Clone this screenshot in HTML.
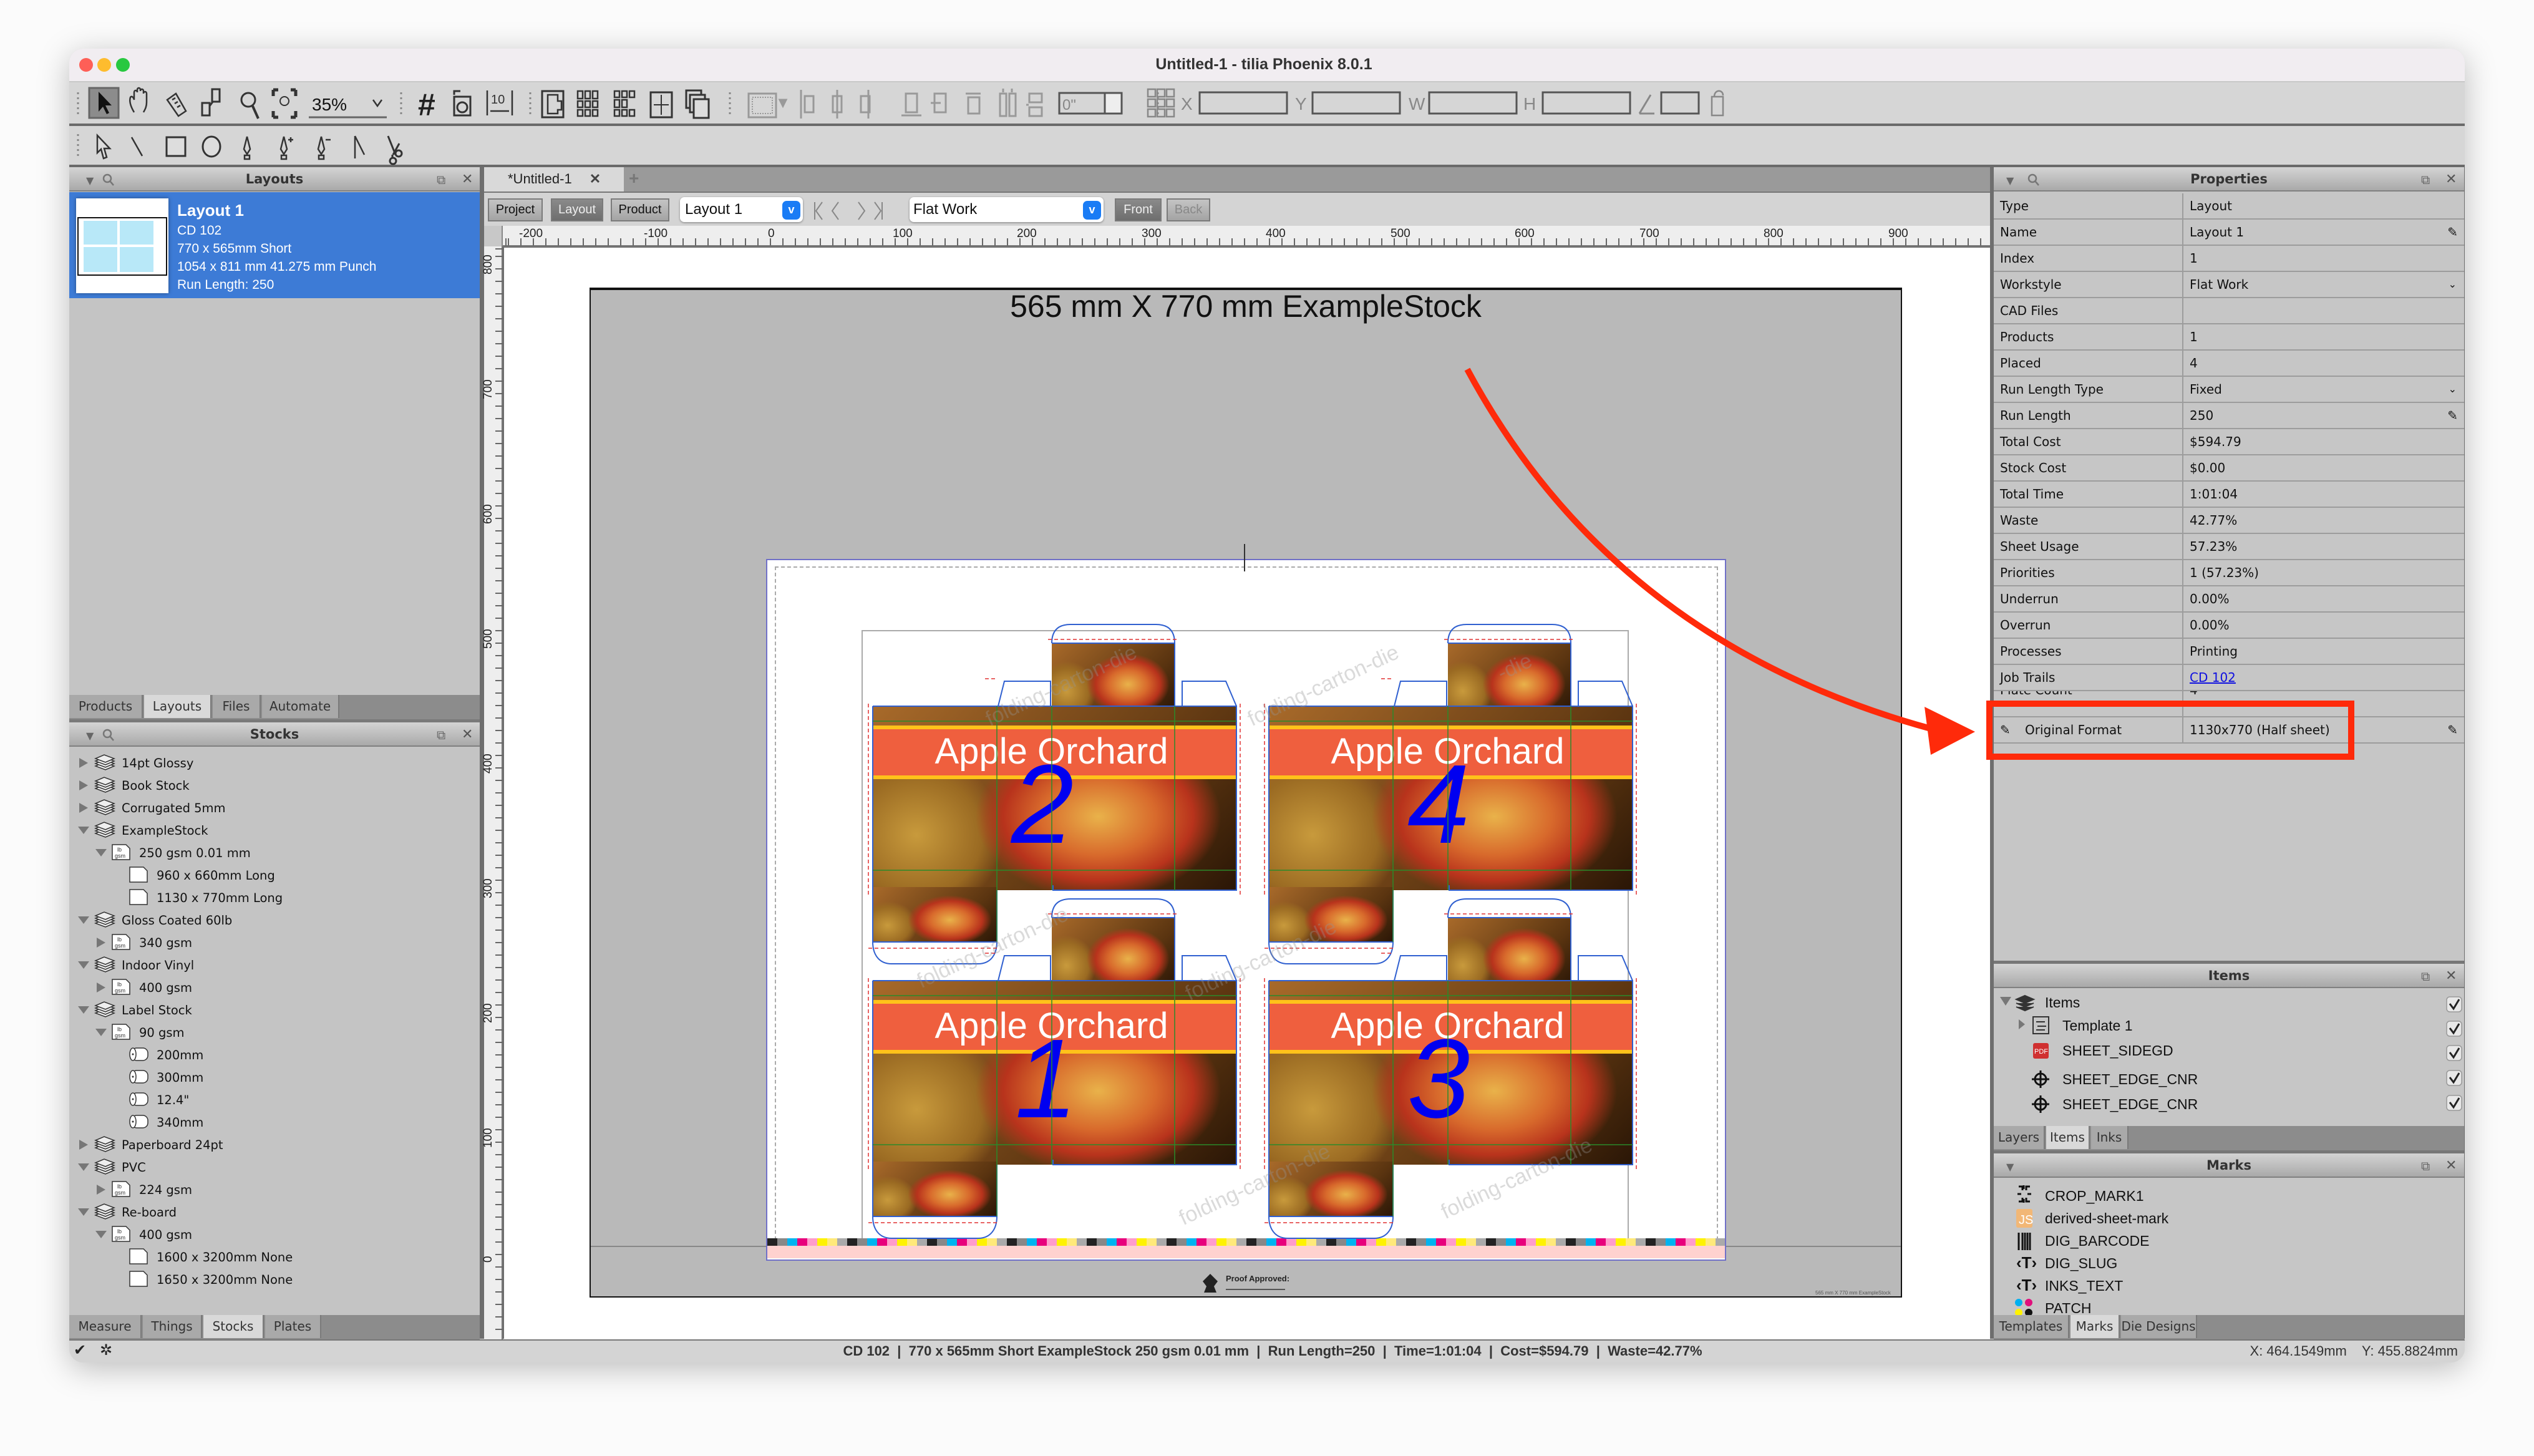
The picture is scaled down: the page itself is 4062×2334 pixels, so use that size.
<!DOCTYPE html>
<html><head><meta charset="utf-8">
<style>
*{margin:0;padding:0;box-sizing:border-box}
body{width:4062px;height:2334px;background:#fbfbfb;position:relative;overflow:hidden;font-family:"Liberation Sans",sans-serif;color:#111}
.a{position:absolute}
.win{left:111px;top:78px;width:3840px;height:2106px;border-radius:22px;background:#d6d6d6;box-shadow:0 10px 50px rgba(0,0,0,.25);overflow:hidden}
.ph{position:absolute;height:39px;background:linear-gradient(#d4d4d4,#a9a9a9);border-bottom:2px solid #808080;font:bold 21px "DejaVu Sans",sans-serif;color:#333;text-align:center;line-height:38px}
.tabs{position:absolute;height:39px;background:#8c8c8c}
.tab{position:absolute;top:0;height:37px;background:#a9a9a9;border-right:2px solid #7a7a7a;font:20px "DejaVu Sans",sans-serif;color:#333;line-height:37px;text-align:center;white-space:nowrap}
.tab.s{background:#d9d9d9}
.pr{position:absolute;left:3196px;width:754px;height:42px;border-bottom:2px solid #9c9c9c;font:20px "DejaVu Sans",sans-serif;line-height:40px}
.pr span{position:absolute}
.pr .l{left:10px}.pr .v{left:314px}
.pr:before{content:"";position:absolute;left:302px;top:0;bottom:0;width:2px;background:#9c9c9c}
.btn{position:absolute;top:318px;height:37px;border:2px solid #7b7b7b;background:linear-gradient(#c4c4c4,#a4a4a4);font:20px "Liberation Sans",sans-serif;line-height:33px;text-align:center;color:#111}
.btn.d{background:linear-gradient(#8a8a8a,#6e6e6e);color:#eee}
.rl{position:absolute;top:364px;font:19px "Liberation Sans",sans-serif;color:#222}
.vl{position:absolute;left:772px;font:19px "Liberation Sans",sans-serif;color:#222;transform:rotate(-90deg);transform-origin:left top}
.ct{position:absolute;width:583px;height:378px}
.photo{position:absolute;background:radial-gradient(ellipse 45% 60% at 62% 60%,#e9b24a 0%,#d86a2c 35%,#b8331c 58%,rgba(120,40,10,0) 75%),radial-gradient(ellipse 30% 55% at 12% 70%,#c89a3c 0%,#9a6a22 60%,rgba(0,0,0,0) 80%),linear-gradient(135deg,#a86a2a,#5a3410 70%,#2a1606)}
.band{position:absolute;left:0;top:31px;width:583px;height:86px;background:#ef5f3e;border-top:6px solid #ffc21a;border-bottom:6px solid #ffc21a;color:#fff;font:58px "Liberation Sans",sans-serif;line-height:72px;text-align:center;text-indent:-10px;white-space:nowrap}
.num{position:absolute;font:italic 180px "Liberation Sans",sans-serif;color:#0000f0;line-height:1}
.wm{position:absolute;font:34px "Liberation Sans",sans-serif;color:rgba(150,150,150,.35);transform:rotate(-25deg);white-space:nowrap}
</style></head><body>
<div class="a win"></div>
<div class="a" style="left:111px;top:78px;width:3840px;height:54px;background:#f1edf1;border-radius:22px 22px 0 0;border-bottom:2px solid #c8c8c8"></div>
<div class="a" style="left:127px;top:93px;width:22px;height:22px;border-radius:50%;background:#fe5f57"></div>
<div class="a" style="left:156px;top:93px;width:22px;height:22px;border-radius:50%;background:#febc2e"></div>
<div class="a" style="left:186px;top:93px;width:22px;height:22px;border-radius:50%;background:#28c840"></div>
<div class="a" style="left:1500px;top:89px;width:1052px;text-align:center;font:bold 25px 'Liberation Sans',sans-serif;color:#333">Untitled-1 - tilia Phoenix 8.0.1</div>
<div class="a" style="left:111px;top:132px;width:3840px;height:66px;background:#d6d6d6"></div>
<div class="a" style="left:111px;top:198px;width:3840px;height:4px;background:#6a6a6a"></div>
<div class="a" style="left:111px;top:202px;width:3840px;height:62px;background:#d6d6d6"></div>
<div class="a" style="left:111px;top:264px;width:3840px;height:4px;background:#6a6a6a"></div>
<svg class="a" style="left:0;top:0" width="4062" height="268" fill="none" stroke="#333" stroke-width="3">
<g stroke="#888" stroke-dasharray="3 5" stroke-width="3"><path d="M125 148v40M643 148v40M850 148v40M1170 148v40M125 215v40M1856 148v40"/></g>
<rect x="143" y="141" width="47" height="48" fill="#8c8c8c" stroke="#666"/>
<path d="M158 147l0 32 7-8 6 12 4-2-6-12 10 0z" fill="#111" stroke="none"/>
<path d="M215 180c-6-10-8-18-6-24 2-3 5 0 6 4v-12c0-4 5-4 5 0v-4c0-4 5-4 5 0v2c0-4 5-4 5 0v4c0-4 5-4 5 0v14c0 8-3 12-5 16" stroke-width="2.5"/>
<path d="M268 160l14-10 16 28-12 8z M276 160l5-3M280 166l5-3M284 172l5-3" stroke-width="2.5"/>
<rect x="324" y="165" width="12" height="20"/><rect x="340" y="143" width="12" height="20"/><path d="M336 170l6-8"/>
<circle cx="398" cy="160" r="11"/><path d="M405 170l9 20" stroke-width="4"/>
<path d="M438 144h8M438 144v10M474 144h-8M474 144v10M438 188h8M438 188v-10M474 188h-8M474 188v-10" stroke-width="5"/><circle cx="456" cy="162" r="7" stroke-width="2"/>
<text x="500" y="177" font-family="Liberation Sans" font-size="28" fill="#111" stroke="none">35%</text>
<path d="M495 188h125" stroke="#666"/><path d="M598 160l7 10 7-10" stroke-width="2.5"/>
<text x="670" y="185" font-family="Liberation Sans" font-size="50" font-weight="bold" fill="#222" stroke="none">#</text>
<rect x="728" y="155" width="26" height="30"/><circle cx="741" cy="172" r="8"/><path d="M728 152v-6h10"/>
<path d="M781 145v40M821 145v40M786 178h30" stroke-width="2.5"/><text x="787" y="166" font-family="Liberation Sans" font-size="20" fill="#333" stroke="none">10</text>
<rect x="869" y="146" width="34" height="42"/><path d="M878 152h16v10h6v14h-6v6h-16z" stroke-width="2.5"/>
<g stroke-width="2.5"><rect x="926" y="146" width="8" height="12"/><rect x="938" y="146" width="8" height="12"/><rect x="950" y="146" width="8" height="12"/><rect x="926" y="162" width="8" height="10"/><rect x="938" y="162" width="8" height="10"/><rect x="950" y="162" width="8" height="10"/><rect x="926" y="176" width="8" height="10"/><rect x="938" y="176" width="8" height="10"/><rect x="950" y="176" width="8" height="10"/>
<rect x="985" y="146" width="8" height="10"/><rect x="997" y="146" width="8" height="10"/><rect x="985" y="160" width="8" height="12"/><rect x="997" y="160" width="8" height="12"/><rect x="985" y="176" width="8" height="10"/><rect x="997" y="176" width="8" height="10"/><rect x="1009" y="146" width="8" height="10"/><rect x="1009" y="176" width="8" height="10"/></g>
<rect x="1043" y="148" width="34" height="40"/><path d="M1060 152v32M1048 168h24" stroke-width="2"/>
<rect x="1100" y="145" width="24" height="28"/><rect x="1106" y="152" width="24" height="28" fill="#d6d6d6"/><rect x="1112" y="159" width="24" height="30" fill="#ddd"/>
<g stroke="#999"><rect x="1200" y="150" width="44" height="38"/><rect x="1206" y="156" width="32" height="26" stroke-dasharray="2 2" stroke-width="2"/><path d="M1250 160l5 10 5-10z" fill="#999"/>
<path d="M1284 144v46M1290 154h14v26h-14z M1342 144v46M1335 154h14v26h-14z M1392 144v46M1380 154h14v26h-14z M1445 185h32M1452 150h18v30h-18z M1492 165h16M1498 150h18v30h-18z M1548 150h24M1552 156h18v26h-18z"/>
<path d="M1603 150v36h10v-36zM1618 150v36h10v-36zM1608 142v6M1622 142v6 M1650 150h20v14h-20zM1650 172h20v14h-20zM1645 168h4"/></g>
<rect x="1698" y="149" width="100" height="33" fill="#d6d6d6" stroke="#555"/><rect x="1771" y="149" width="27" height="33" fill="#eee" stroke="#555"/>
<text x="1703" y="176" font-family="Liberation Sans" font-size="24" fill="#888" stroke="none">0"</text>
<g stroke="#888" stroke-width="2.5"><rect x="1840" y="143" width="12" height="12"/><rect x="1855" y="143" width="12" height="12"/><rect x="1870" y="143" width="12" height="12"/><rect x="1840" y="159" width="12" height="12"/><rect x="1855" y="159" width="12" height="12"/><rect x="1870" y="159" width="12" height="12"/><rect x="1840" y="175" width="12" height="12"/><rect x="1855" y="175" width="12" height="12"/><rect x="1870" y="175" width="12" height="12"/></g>
<g stroke="#555" fill="#d6d6d6"><rect x="1923" y="148" width="140" height="34"/><rect x="2104" y="148" width="140" height="34"/><rect x="2291" y="148" width="140" height="34"/><rect x="2473" y="148" width="140" height="34"/><rect x="2663" y="148" width="60" height="34"/></g>
<g font-family="Liberation Sans" font-size="28" fill="#888" stroke="none"><text x="1893" y="176">X</text><text x="2076" y="176">Y</text><text x="2258" y="176">W</text><text x="2442" y="176">H</text></g>
<path d="M2628 182l18-30M2628 182h24" stroke="#888"/><path d="M2744 185v-30h18v30zM2748 155c0-12 14-12 14-2" stroke="#888" stroke-width="2.5"/>
<path d="M156 217v28l6-6 4 15 5-2-4-14h9z" fill="#ddd" stroke-width="2.5"/>
<path d="M211 220l17 30" stroke-width="2.5"/>
<rect x="267" y="220" width="30" height="30" fill="#ddd"/>
<ellipse cx="339" cy="235" rx="14" ry="16" fill="#ddd"/>
<path d="M396 219l-5 20 5 8 5-8zM392 249h8v6h-8z" stroke-width="2.5"/>
<path d="M455 219l-5 20 5 8 5-8zM451 249h8v6h-8zM462 224h8M466 220v8" stroke-width="2.5"/>
<path d="M515 219l-5 20 5 8 5-8zM511 249h8v6h-8zM522 224h8" stroke-width="2.5"/>
<path d="M569 218v36M569 218l15 30" stroke-width="2.5"/>
<path d="M622 218l12 30M640 230l-10 18M629 248v6" stroke-width="3"/><circle cx="639" cy="246" r="5"/><circle cx="630" cy="258" r="5"/>
</svg>

<div class="a" style="left:111px;top:268px;width:3840px;height:1878px;background:#6e6e6e"></div>

<!-- LEFT PANEL -->
<div class="a" style="left:111px;top:268px;width:658px;height:1878px;background:#c4c4c4"></div>
<div class="ph" style="left:111px;top:268px;width:658px">Layouts</div>
<div class="a" style="left:138px;top:280px;font:16px 'DejaVu Sans';color:#666">▼</div>
<svg class="a" style="left:162px;top:276px" width="24" height="24" fill="none" stroke="#777" stroke-width="2.5"><circle cx="10" cy="10" r="6"/><path d="M14 14l6 7"/></svg>
<div class="a" style="left:700px;top:276px;font:20px 'DejaVu Sans';color:#666">⧉</div>
<div class="a" style="left:740px;top:275px;font:bold 22px 'DejaVu Sans';color:#555">✕</div>
<div class="a" style="left:111px;top:308px;width:658px;height:170px;background:#3d7bd6"></div>
<div class="a" style="left:122px;top:318px;width:148px;height:152px;background:#fff;box-shadow:0 0 6px rgba(0,0,0,.4)"></div>
<div class="a" style="left:124px;top:348px;width:144px;height:94px;border:2px solid #111;background:#fff"></div>
<div class="a" style="left:134px;top:354px;width:54px;height:38px;background:#b8e8f8"></div>
<div class="a" style="left:192px;top:354px;width:54px;height:38px;background:#b8e8f8"></div>
<div class="a" style="left:134px;top:396px;width:54px;height:40px;background:#b8e8f8"></div>
<div class="a" style="left:192px;top:396px;width:54px;height:40px;background:#b8e8f8"></div>
<div class="a" style="left:284px;top:322px;font:bold 26px 'Liberation Sans';color:#fff">Layout 1</div>
<div class="a" style="left:284px;top:355px;font:21px/29px 'Liberation Sans';color:#fff">CD 102<br>770 x 565mm Short<br>1054 x 811 mm 41.275 mm Punch<br>Run Length: 250</div>

<div class="tabs" style="left:111px;top:1114px;width:658px">
<div class="tab" style="left:0;width:118px">Products</div><div class="tab s" style="left:120px;width:108px">Layouts</div><div class="tab" style="left:230px;width:77px">Files</div><div class="tab" style="left:309px;width:124px">Automate</div></div>
<div class="a" style="left:111px;top:1153px;width:658px;height:5px;background:#7a7a7a"></div>
<div class="ph" style="left:111px;top:1158px;width:658px">Stocks</div>
<div class="a" style="left:138px;top:1170px;font:16px 'DejaVu Sans';color:#666">▼</div>
<svg class="a" style="left:162px;top:1166px" width="24" height="24" fill="none" stroke="#777" stroke-width="2.5"><circle cx="10" cy="10" r="6"/><path d="M14 14l6 7"/></svg>
<div class="a" style="left:700px;top:1166px;font:20px 'DejaVu Sans';color:#666">⧉</div>
<div class="a" style="left:740px;top:1165px;font:bold 22px 'DejaVu Sans';color:#555">✕</div>

<svg class="a" style="left:111px;top:1205px" width="658" height="870">
<defs>
<g id="stk" fill="#eee" stroke="#333" stroke-width="1.5"><path d="M2 18l14-6 16 6-14 6z"/><path d="M2 14l14-6 16 6-14 6z"/><path d="M2 10l14-6 16 6-14 6z"/><path d="M2 6l14-6 16 6-14 6z"/></g>
<g id="gsm"><path d="M1 1h22l6 6v18h-28z" fill="#fff" stroke="#333" stroke-width="1.5"/><text x="9" y="12" font-size="9" font-family="Liberation Sans" fill="#333">lb</text><text x="5" y="22" font-size="9" font-family="Liberation Sans" fill="#333">gsm</text></g>
<g id="sht"><path d="M1 1h22l6 6v18h-28z" fill="#fff" stroke="#333" stroke-width="1.5"/></g>
<g id="rol"><rect x="4" y="3" width="26" height="20" rx="8" fill="#fff" stroke="#333" stroke-width="1.5"/><ellipse cx="6" cy="13" rx="5" ry="10" fill="#fff" stroke="#333" stroke-width="1.5"/><circle cx="6" cy="13" r="1.5" fill="#333"/></g>
<path id="rt" d="M0 0l14 8-14 8z" fill="#777"/>
<path id="dn" d="M0 0h18l-9 12z" fill="#777"/>
</defs>
<g font-family="DejaVu Sans" font-size="19.5" fill="#111">
<use href="#rt" x="16" y="10"/><use href="#stk" x="40" y="5"/><text x="84" y="25">14pt Glossy</text>
<use href="#rt" x="16" y="46"/><use href="#stk" x="40" y="41"/><text x="84" y="61">Book Stock</text>
<use href="#rt" x="16" y="82"/><use href="#stk" x="40" y="77"/><text x="84" y="97">Corrugated 5mm</text>
<use href="#dn" x="14" y="120"/><use href="#stk" x="40" y="113"/><text x="84" y="133">ExampleStock</text>
<use href="#dn" x="42" y="156"/><use href="#gsm" x="68" y="148"/><text x="112" y="169">250 gsm 0.01 mm</text>
<use href="#sht" x="96" y="184"/><text x="140" y="205">960 x 660mm Long</text>
<use href="#sht" x="96" y="220"/><text x="140" y="241">1130 x 770mm Long</text>
<use href="#dn" x="14" y="264"/><use href="#stk" x="40" y="257"/><text x="84" y="277">Gloss Coated 60lb</text>
<use href="#rt" x="44" y="298"/><use href="#gsm" x="68" y="292"/><text x="112" y="313">340 gsm</text>
<use href="#dn" x="14" y="336"/><use href="#stk" x="40" y="329"/><text x="84" y="349">Indoor Vinyl</text>
<use href="#rt" x="44" y="370"/><use href="#gsm" x="68" y="364"/><text x="112" y="385">400 gsm</text>
<use href="#dn" x="14" y="408"/><use href="#stk" x="40" y="401"/><text x="84" y="421">Label Stock</text>
<use href="#dn" x="42" y="444"/><use href="#gsm" x="68" y="436"/><text x="112" y="457">90 gsm</text>
<use href="#rol" x="96" y="472"/><text x="140" y="493">200mm</text>
<use href="#rol" x="96" y="508"/><text x="140" y="529">300mm</text>
<use href="#rol" x="96" y="544"/><text x="140" y="565">12.4"</text>
<use href="#rol" x="96" y="580"/><text x="140" y="601">340mm</text>
<use href="#rt" x="16" y="622"/><use href="#stk" x="40" y="617"/><text x="84" y="637">Paperboard 24pt</text>
<use href="#dn" x="14" y="660"/><use href="#stk" x="40" y="653"/><text x="84" y="673">PVC</text>
<use href="#rt" x="44" y="694"/><use href="#gsm" x="68" y="688"/><text x="112" y="709">224 gsm</text>
<use href="#dn" x="14" y="732"/><use href="#stk" x="40" y="725"/><text x="84" y="745">Re-board</text>
<use href="#dn" x="42" y="768"/><use href="#gsm" x="68" y="760"/><text x="112" y="781">400 gsm</text>
<use href="#sht" x="96" y="796"/><text x="140" y="817">1600 x 3200mm None</text>
<use href="#sht" x="96" y="832"/><text x="140" y="853">1650 x 3200mm None</text>
</g></svg>
<div class="tabs" style="left:111px;top:2108px;width:658px">
<div class="tab" style="left:0;width:116px">Measure</div><div class="tab" style="left:118px;width:95px">Things</div><div class="tab s" style="left:215px;width:97px">Stocks</div><div class="tab" style="left:314px;width:90px">Plates</div></div>

<!-- CENTER -->
<div class="a" style="left:776px;top:268px;width:2414px;height:39px;background:#9a9a9a"></div>
<div class="a" style="left:776px;top:268px;width:224px;height:39px;background:#d9d9d9;font:22px 'Liberation Sans';line-height:38px;color:#222"><span style="margin-left:38px">*Untitled-1</span><span style="margin-left:28px;font-weight:bold;color:#444">✕</span></div>
<div class="a" style="left:1008px;top:270px;font:bold 28px 'Liberation Sans';color:#777">+</div>
<div class="a" style="left:776px;top:307px;width:2414px;height:55px;background:#d4d4d4;border-top:2px solid #777"></div>
<div class="btn" style="left:782px;width:88px">Project</div>
<div class="btn d" style="left:883px;width:84px">Layout</div>
<div class="btn" style="left:979px;width:94px">Product</div>
<div class="a" style="left:1090px;top:316px;width:197px;height:40px;background:#fff;border-radius:7px;box-shadow:0 1px 3px rgba(0,0,0,.4);font:24px 'Liberation Sans';line-height:40px;padding-left:8px">Layout 1</div>
<div class="a" style="left:1254px;top:322px;width:29px;height:30px;background:#1a7cf5;border-radius:7px;color:#fff;font:bold 18px 'Liberation Sans';text-align:center;line-height:28px">v</div>
<svg class="a" style="left:1300px;top:318px" width="150" height="40" fill="none" stroke="#888" stroke-width="2"><path d="M6 6v28M18 6l-10 14 10 14M44 6l-10 14 10 14M76 6l10 14-10 14M102 6l10 14-10 14M114 6v28"/></svg>
<div class="a" style="left:1458px;top:316px;width:311px;height:40px;background:#fff;border-radius:7px;box-shadow:0 1px 3px rgba(0,0,0,.4);font:24px 'Liberation Sans';line-height:40px;padding-left:6px">Flat Work</div>
<div class="a" style="left:1736px;top:322px;width:29px;height:30px;background:#1a7cf5;border-radius:7px;color:#fff;font:bold 18px 'Liberation Sans';text-align:center;line-height:28px">v</div>
<div class="btn d" style="left:1787px;width:75px">Front</div>
<div class="btn" style="left:1870px;width:70px;color:#888">Back</div>

<div class="a" style="left:776px;top:362px;width:2414px;height:33px;background:#eeeeee;border-bottom:2px solid #777"></div>
<div class="a" style="left:806px;top:382px;width:2384px;height:12px;background:repeating-linear-gradient(90deg,#666 0 2px,transparent 2px 20px);background-position:8px 0"></div>
<div class="a" style="left:776px;top:362px;width:30px;height:33px;background:#c8c8c8;border-right:2px solid #888"></div>
<div class="rl" style="left:832px">-200</div><div class="rl" style="left:1032px">-100</div><div class="rl" style="left:1231px">0</div><div class="rl" style="left:1431px">100</div><div class="rl" style="left:1630px">200</div><div class="rl" style="left:1830px">300</div><div class="rl" style="left:2029px">400</div><div class="rl" style="left:2229px">500</div><div class="rl" style="left:2428px">600</div><div class="rl" style="left:2628px">700</div><div class="rl" style="left:2827px">800</div><div class="rl" style="left:3027px">900</div>
<div class="a" style="left:776px;top:395px;width:30px;height:1752px;background:#eeeeee;border-right:2px solid #777"></div>
<div class="a" style="left:794px;top:395px;width:12px;height:1752px;background:repeating-linear-gradient(180deg,#666 0 2px,transparent 2px 20px);background-position:0 15px"></div>
<div class="vl" style="top:440px">800</div><div class="vl" style="top:640px">700</div><div class="vl" style="top:840px">600</div><div class="vl" style="top:1040px">500</div><div class="vl" style="top:1240px">400</div><div class="vl" style="top:1440px">300</div><div class="vl" style="top:1640px">200</div><div class="vl" style="top:1840px">100</div><div class="vl" style="top:2024px">0</div>

<div class="a" style="left:808px;top:397px;width:2382px;height:1750px;background:#fff"></div>
<div class="a" style="left:945px;top:461px;width:2104px;height:1619px;background:#b9b9b9;border:2px solid #111;border-top-width:4px"></div>
<div class="a" style="left:945px;top:462px;width:2104px;text-align:center;font:50px 'Liberation Sans';color:#111">565 mm X 770 mm ExampleStock</div>
<div class="a" style="left:947px;top:1997px;width:2100px;height:2px;background:#888"></div>
<div class="a" style="left:1228px;top:896px;width:1539px;height:1125px;background:#fff;border:2px solid #7070c8"></div>
<div class="a" style="left:1242px;top:908px;width:1512px;height:1090px;border:2px dashed #aaa"></div>
<div class="a" style="left:1994px;top:872px;width:2px;height:44px;background:#333"></div>
<div class="a" style="left:1381px;top:1010px;width:1230px;height:985px;border:2px solid #aaa"></div>
<div class="a" style="left:1230px;top:1985px;width:1535px;height:12px;background:repeating-linear-gradient(90deg,#222 0 16px,#888 16px 32px,#00b4f0 32px 48px,#e8007c 48px 64px,#ff9ccc 64px 80px,#fff200 80px 96px,#ffe97a 96px 112px,#aaa 112px 128px)"></div>
<div class="a" style="left:1230px;top:1997px;width:1535px;height:20px;background:#ffd2cf"></div>
<svg class="a" style="left:1925px;top:2040px" width="30" height="34"><path d="M15 2l12 12-6 8 4 10H5l4-10-6-8z" fill="#222"/></svg>
<div class="a" style="left:1965px;top:2042px;font:bold 13px 'Liberation Sans';color:#222">Proof Approved:</div>
<div class="a" style="left:1965px;top:2066px;width:95px;height:2px;background:#555"></div>
<div class="a" style="left:2910px;top:2068px;font:8px 'Liberation Sans';color:#555">565 mm X 770 mm ExampleStock</div>

<div class="ct" style="left:1399px;top:1132px">
<div class="photo" style="left:287px;top:-101px;width:197px;height:110px"></div>
<div class="photo" style="left:0;top:0;width:583px;height:295px"></div>
<div class="photo" style="left:0;top:290px;width:199px;height:88px"></div>
<div class="band">Apple Orchard</div>
<div class="num" style="left:222px;top:68px">2</div>
</div>
<div class="ct" style="left:2034px;top:1132px">
<div class="photo" style="left:287px;top:-101px;width:197px;height:110px"></div>
<div class="photo" style="left:0;top:0;width:583px;height:295px"></div>
<div class="photo" style="left:0;top:290px;width:199px;height:88px"></div>
<div class="band">Apple Orchard</div>
<div class="num" style="left:222px;top:68px">4</div>
</div>
<div class="ct" style="left:1399px;top:1572px">
<div class="photo" style="left:287px;top:-101px;width:197px;height:110px"></div>
<div class="photo" style="left:0;top:0;width:583px;height:295px"></div>
<div class="photo" style="left:0;top:290px;width:199px;height:88px"></div>
<div class="band">Apple Orchard</div>
<div class="num" style="left:228px;top:68px">1</div>
</div>
<div class="ct" style="left:2034px;top:1572px">
<div class="photo" style="left:287px;top:-101px;width:197px;height:110px"></div>
<div class="photo" style="left:0;top:0;width:583px;height:295px"></div>
<div class="photo" style="left:0;top:290px;width:199px;height:88px"></div>
<div class="band">Apple Orchard</div>
<div class="num" style="left:222px;top:68px">3</div>
</div>
<svg class="a" style="left:1380px;top:1000px" width="1250" height="1000" fill="none">
<defs><g id="die">
<path d="M19 132h583v295H308v-8M19 132v378h199v-83M306 31h197v101M306 31c0-20 10-30 30-30h137c20 0 30 10 30 30M218 510v-83M19 510c0 20 10 35 30 35h139c20 0 30-15 30-35M220 132l10-40h74v40M503 132h12v-40h70l17 40" stroke="#3060d0" stroke-width="2"/>
<path d="M19 156h583M19 395h583M306 132v295M503 132v295M218 132v378" stroke="#2a8a2a" stroke-width="1.5"/>
<path d="M12 128v306M608 128v306M300 25h209M215 88h-20M12 520h210" stroke="#e03030" stroke-width="1.5" stroke-dasharray="6 4"/>
</g></defs>
<use href="#die" x="0" y="0"/><use href="#die" x="635" y="0"/><use href="#die" x="0" y="440"/><use href="#die" x="635" y="440"/>
</svg>
<div class="wm" style="left:1570px;top:1080px">folding-carton-die</div>
<div class="wm" style="left:1990px;top:1080px">folding-carton-die</div>
<div class="wm" style="left:2400px;top:1050px">-die</div>
<div class="wm" style="left:1460px;top:1500px">folding-carton-die</div>
<div class="wm" style="left:1890px;top:1520px">folding-carton-die</div>
<div class="wm" style="left:1880px;top:1880px">folding-carton-die</div>
<div class="wm" style="left:2300px;top:1870px">folding-carton-die</div>

<!-- RIGHT PANEL -->
<div class="a" style="left:3196px;top:268px;width:754px;height:1878px;background:#c6c6c6"></div>
<div class="ph" style="left:3196px;top:268px;width:754px">Properties</div>
<div class="a" style="left:3216px;top:280px;font:16px 'DejaVu Sans';color:#666">▼</div>
<svg class="a" style="left:3248px;top:276px" width="24" height="24" fill="none" stroke="#777" stroke-width="2.5"><circle cx="10" cy="10" r="6"/><path d="M14 14l6 7"/></svg>
<div class="a" style="left:3881px;top:276px;font:20px 'DejaVu Sans';color:#666">⧉</div>
<div class="a" style="left:3920px;top:275px;font:bold 22px 'DejaVu Sans';color:#555">✕</div>
<div class="pr" style="top:310px"><span class="l">Type</span><span class="v">Layout</span></div>
<div class="pr" style="top:352px"><span class="l">Name</span><span class="v">Layout 1</span><span style="right:10px">✎</span></div>
<div class="pr" style="top:394px"><span class="l">Index</span><span class="v">1</span></div>
<div class="pr" style="top:436px"><span class="l">Workstyle</span><span class="v">Flat Work</span><span style="right:12px;font-size:16px">⌄</span></div>
<div class="pr" style="top:478px"><span class="l">CAD Files</span><span class="v"></span></div>
<div class="pr" style="top:520px"><span class="l">Products</span><span class="v">1</span></div>
<div class="pr" style="top:562px"><span class="l">Placed</span><span class="v">4</span></div>
<div class="pr" style="top:604px"><span class="l">Run Length Type</span><span class="v">Fixed</span><span style="right:12px;font-size:16px">⌄</span></div>
<div class="pr" style="top:646px"><span class="l">Run Length</span><span class="v">250</span><span style="right:10px">✎</span></div>
<div class="pr" style="top:688px"><span class="l">Total Cost</span><span class="v">$594.79</span></div>
<div class="pr" style="top:730px"><span class="l">Stock Cost</span><span class="v">$0.00</span></div>
<div class="pr" style="top:772px"><span class="l">Total Time</span><span class="v">1:01:04</span></div>
<div class="pr" style="top:814px"><span class="l">Waste</span><span class="v">42.77%</span></div>
<div class="pr" style="top:856px"><span class="l">Sheet Usage</span><span class="v">57.23%</span></div>
<div class="pr" style="top:898px"><span class="l">Priorities</span><span class="v">1 (57.23%)</span></div>
<div class="pr" style="top:940px"><span class="l">Underrun</span><span class="v">0.00%</span></div>
<div class="pr" style="top:982px"><span class="l">Overrun</span><span class="v">0.00%</span></div>
<div class="pr" style="top:1024px"><span class="l">Processes</span><span class="v">Printing</span></div>
<div class="pr" style="top:1066px"><span class="l">Job Trails</span><span class="v" style="color:#1010e0;text-decoration:underline">CD 102</span></div>
<div class="pr" style="top:1108px;overflow:hidden"><span class="l" style="top:-22px">Plate Count</span><span class="v" style="top:-22px">4</span></div>
<div class="pr" style="top:1150px"><span class="l" style="left:50px">Original Format</span><span style="left:10px">✎</span><span class="v">1130x770 (Half sheet)</span><span style="right:10px">✎</span></div>
<div class="a" style="left:3184px;top:1123px;width:590px;height:95px;border:10px solid #ff2a0a"></div>
<svg class="a" style="left:0;top:0" width="4062" height="1300" fill="none">
<path d="M2352 592C2480 830 2700 1060 3095 1168" stroke="#ff2a0a" stroke-width="10"/>
<path d="M3166 1173L3085 1133L3095 1210Z" fill="#ff2a0a"/>
</svg>

<div class="a" style="left:3196px;top:1540px;width:754px;height:5px;background:#777"></div>
<div class="ph" style="left:3196px;top:1545px;width:754px">Items</div>
<div class="a" style="left:3881px;top:1553px;font:20px 'DejaVu Sans';color:#666">⧉</div>
<div class="a" style="left:3920px;top:1552px;font:bold 22px 'DejaVu Sans';color:#555">✕</div>
<svg class="a" style="left:3196px;top:1590px" width="754" height="215">
<g font-family="Liberation Sans" font-size="23" fill="#111">
<path d="M10 8h18l-9 14z" fill="#777"/>
<path d="M50 6l14 6-14 6-14-6z M36 18l14 6 14-6 M36 24l14 6 14-6" fill="#333" stroke="#333" stroke-width="2"/><text x="82" y="25">Items</text>
<path d="M40 44l10 8-10 8z" fill="#777"/><rect x="63" y="40" width="25" height="27" fill="none" stroke="#333" stroke-width="2"/><path d="M68 48h14M70 55h14M68 61h14" stroke="#333" stroke-width="2"/><text x="110" y="62">Template 1</text>
<rect x="63" y="82" width="25" height="25" rx="3" fill="#d03030"/><text x="65" y="99" font-size="11" fill="#fff">PDF</text><text x="110" y="102">SHEET_SIDEGD</text>
<circle cx="75" cy="140" r="9" fill="none" stroke="#111" stroke-width="3"/><path d="M75 126v28M61 140h28" stroke="#111" stroke-width="3"/><text x="110" y="148">SHEET_EDGE_CNR</text>
<circle cx="75" cy="180" r="9" fill="none" stroke="#111" stroke-width="3"/><path d="M75 166v28M61 180h28" stroke="#111" stroke-width="3"/><text x="110" y="188">SHEET_EDGE_CNR</text>
</g>
<g fill="#e8e8e8" stroke="#999" stroke-width="1.5"><rect x="726" y="8" width="24" height="24" rx="5"/><rect x="726" y="47" width="24" height="24" rx="5"/><rect x="726" y="86" width="24" height="24" rx="5"/><rect x="726" y="126" width="24" height="24" rx="5"/><rect x="726" y="166" width="24" height="24" rx="5"/></g>
<g stroke="#222" stroke-width="3" fill="none"><path d="M731 19l6 8 9-15M731 58l6 8 9-15M731 97l6 8 9-15M731 137l6 8 9-15M731 177l6 8 9-15"/></g>
</svg>
<div class="tabs" style="left:3196px;top:1805px;width:754px">
<div class="tab" style="left:0;width:82px">Layers</div><div class="tab s" style="left:84px;width:70px">Items</div><div class="tab" style="left:156px;width:60px">Inks</div></div>
<div class="a" style="left:3196px;top:1844px;width:754px;height:5px;background:#777"></div>
<div class="ph" style="left:3196px;top:1849px;width:754px">Marks</div>
<div class="a" style="left:3216px;top:1861px;font:16px 'DejaVu Sans';color:#666">▼</div>
<div class="a" style="left:3881px;top:1857px;font:20px 'DejaVu Sans';color:#666">⧉</div>
<div class="a" style="left:3920px;top:1856px;font:bold 22px 'DejaVu Sans';color:#555">✕</div>
<svg class="a" style="left:3196px;top:1890px" width="754" height="220">
<g font-family="Liberation Sans" font-size="23" fill="#111">
<path d="M40 12h6v6M58 12h-6v6M40 36h6v-6M58 36h-6v-6M48 10v6M48 32v6M38 24h6M54 24h6" stroke="#111" stroke-width="3" fill="none"/><text x="82" y="35">CROP_MARK1</text>
<rect x="36" y="48" width="26" height="30" rx="3" fill="#f2b776"/><text x="40" y="72" font-size="20" fill="#fff">JS</text><text x="82" y="71">derived-sheet-mark</text>
<path d="M40 86v28M46 86v28M50 86v28M54 86v28M58 86v28" stroke="#111" stroke-width="3"/><text x="82" y="107">DIG_BARCODE</text>
<text x="36" y="143" font-weight="bold" font-size="26">‹T›</text><text x="82" y="143">DIG_SLUG</text>
<text x="36" y="179" font-weight="bold" font-size="26">‹T›</text><text x="82" y="179">INKS_TEXT</text>
<circle cx="40" cy="198" r="6" fill="#00b0f0"/><circle cx="56" cy="198" r="6" fill="#e0107c"/><circle cx="40" cy="214" r="6" fill="#fff200"/><circle cx="56" cy="214" r="6" fill="#111"/><text x="82" y="215">PATCH</text>
</g></svg>
<div class="tabs" style="left:3196px;top:2108px;width:754px">
<div class="tab" style="left:0;width:121px">Templates</div><div class="tab s" style="left:123px;width:79px">Marks</div><div class="tab" style="left:204px;width:122px">Die Designs</div></div>

<div class="a" style="left:111px;top:2147px;width:3840px;height:37px;background:#d4d4d4;border-top:2px solid #777;border-radius:0 0 22px 22px"></div>
<div class="a" style="left:118px;top:2150px;font:bold 24px 'DejaVu Sans';color:#222">✔</div>
<div class="a" style="left:160px;top:2150px;font:24px 'DejaVu Sans';color:#222">✲</div>
<div class="a" style="left:1000px;top:2153px;width:2080px;text-align:center;font:bold 22px 'Liberation Sans';color:#333;white-space:nowrap">CD 102 &nbsp;|&nbsp; 770 x 565mm Short ExampleStock 250 gsm 0.01 mm &nbsp;|&nbsp; Run Length=250 &nbsp;|&nbsp; Time=1:01:04 &nbsp;|&nbsp; Cost=$594.79 &nbsp;|&nbsp; Waste=42.77%</div>
<div class="a" style="left:3550px;top:2153px;width:390px;text-align:right;font:22px 'Liberation Sans';color:#333;white-space:nowrap">X: 464.1549mm &nbsp;&nbsp; Y: 455.8824mm</div>
</body></html>
